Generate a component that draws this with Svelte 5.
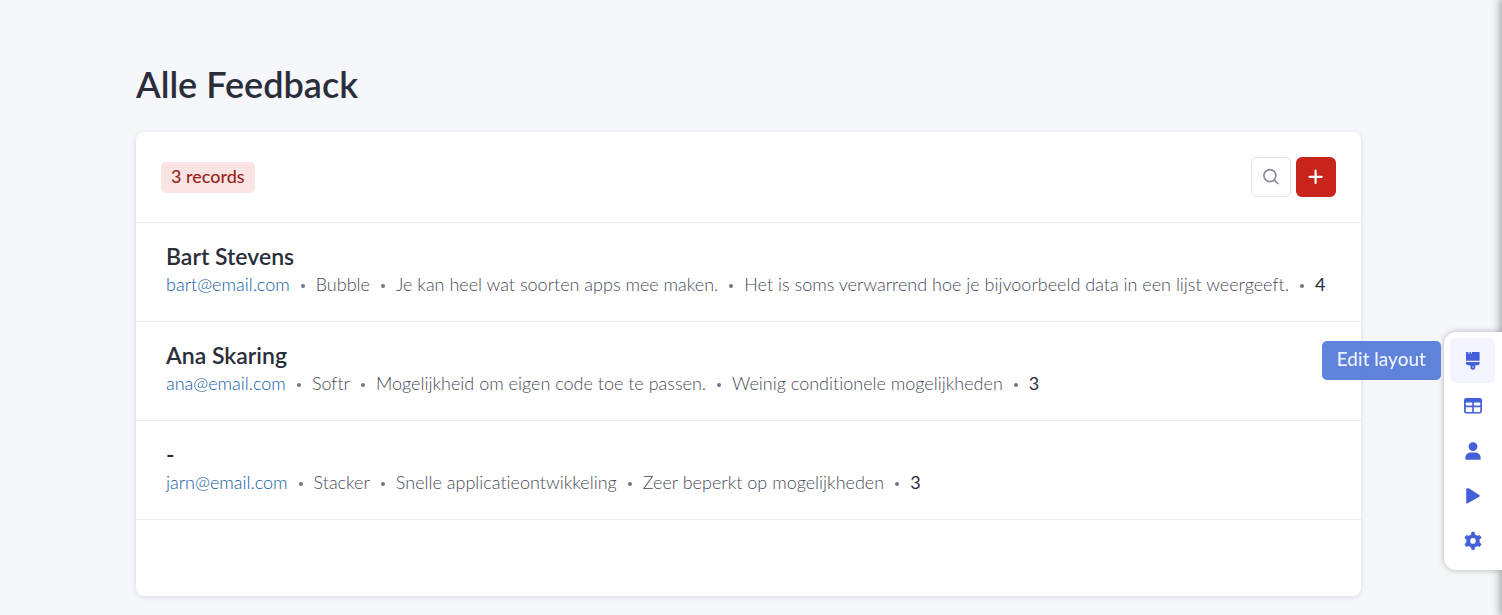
<script>
  const records = [
    {
      name: 'Bart Stevens',
      email: 'bart@email.com',
      details: [
        'Bubble',
        'Je kan heel wat soorten apps mee maken.',
        'Het is soms verwarrend hoe je bijvoorbeeld data in een lijst weergeeft.'
      ],
      score: 4
    },
    {
      name: 'Ana Skaring',
      email: 'ana@email.com',
      details: ['Softr', 'Mogelijkheid om eigen code toe te passen.', 'Weinig conditionele mogelijkheden'],
      score: 3
    },
    {
      name: '-',
      email: 'jarn@email.com',
      details: ['Stacker', 'Snelle applicatieontwikkeling', 'Zeer beperkt op mogelijkheden'],
      score: 3
    }
  ];
</script>

<main>
  <h1>Alle Feedback</h1>
  <section class="card">
    <header>
      <span class="count">{records.length} records</span>
      <div class="actions">
        <button class="search" aria-label="Search">
          <svg width="20" height="20" viewBox="0 0 20 20" fill="none" stroke="#868b9a" stroke-width="1.6">
            <circle cx="8.9" cy="8.6" r="6" /><path d="M13.2 12.9 17.3 17" />
          </svg>
        </button>
        <button class="add" aria-label="Add record">
          <svg width="20" height="20" viewBox="0 0 20 20" stroke="#fff" stroke-width="2.2" stroke-linecap="round">
            <path d="M3.5 9.8h12.2M9.6 3.7v12.2" />
          </svg>
        </button>
      </div>
    </header>
    <ul class="records">
      {#each records as record}
        <li>
          <h2>{record.name}</h2>
          <div class="line">
            <a href="mailto:{record.email}">{record.email}</a>
            {#each record.details as detail}
              <i class="dot"></i><span>{detail}</span>
            {/each}
            <i class="dot"></i><span class="score">{record.score}</span>
          </div>
        </li>
      {/each}
    </ul>
  </section>
</main>

<div class="edge"></div>
<nav class="tools">
  <button class="active" aria-label="Layout" aria-describedby="layout-tip">
    <svg width="20" height="20" viewBox="0 0 20 20" fill="currentColor">
      <path d="M3 1.5Q3 1 3.5 1H5.4V3H6.4V1H8V2.6H9V1H16Q16.6 1 16.6 1.6V9.8H3Z" />
      <path d="M3 10.9H16.6V12.4Q16.6 14.2 14.8 14.2H12.3V16Q12.3 18.8 9.9 18.8Q7.4 18.8 7.4 16V14.2H4.8Q3 14.2 3 12.4Z" />
      <circle cx="9.9" cy="15.9" r=".7" fill="#f3f4fe" />
    </svg>
  </button>
  <button aria-label="Data">
    <svg width="20" height="20" viewBox="0 0 20 20" fill="currentColor" fill-rule="evenodd">
      <path d="M3.3 2H16.7Q19 2 19 4.3V15.2Q19 17.5 16.7 17.5H3.3Q1 17.5 1 15.2V4.3Q1 2 3.3 2ZM2.7 6.4V9.6H9.2V6.4ZM10.8 6.4V9.6H17.3V6.4ZM2.7 11.2V15Q2.7 15.9 3.6 15.9H9.2V11.2ZM10.8 11.2V15.9H16.4Q17.3 15.9 17.3 15V11.2Z" />
    </svg>
  </button>
  <button aria-label="Users">
    <svg width="20" height="20" viewBox="0 0 20 20" fill="currentColor">
      <circle cx="10" cy="5.6" r="4.4" />
      <path d="M2.3 17.5C2.3 13.6 5 11.6 8.2 11.6H11.8C15 11.6 17.7 13.6 17.7 17.5Q17.7 18.8 16.4 18.8H3.6Q2.3 18.8 2.3 17.5Z" />
    </svg>
  </button>
  <button aria-label="Preview">
    <svg width="20" height="20" viewBox="0 0 20 20" fill="currentColor" stroke="currentColor" stroke-width="2" stroke-linejoin="round">
      <path d="M4.2 3.2V16.4L15.8 9.8 5.2 3.2Z" />
    </svg>
  </button>
  <button aria-label="Settings">
    <svg width="20" height="20" viewBox="0 0 20 20" fill="currentColor">
      <path d="M8.2 3.7 8.6 1.8Q8.7 1.1 9.4 1.1H10.6Q11.3 1.1 11.4 1.8L11.8 3.7 14.3 5.1 16.1 4.5Q16.8 4.3 17.2 4.9L17.9 6.1Q18.3 6.8 17.7 7.3L16.3 8.5V11.4L17.7 12.6Q18.3 13.1 17.9 13.7L17.2 14.9Q16.8 15.6 16.1 15.4L14.3 14.8 11.8 16.2 11.4 18.1Q11.3 18.8 10.6 18.8H9.4Q8.7 18.8 8.6 18.1L8.2 16.2 5.7 14.8 3.9 15.4Q3.2 15.6 2.8 14.9L2.1 13.7Q1.7 13.1 2.3 12.6L3.7 11.4V8.5L2.3 7.3Q1.7 6.8 2.1 6.1L2.8 4.9Q3.2 4.3 3.9 4.5L5.7 5.1Z" stroke="currentColor" stroke-width=".6" stroke-linejoin="round" />
      <circle cx="10" cy="9.9" r="2.8" fill="#fff" />
    </svg>
  </button>
  <div class="tip" id="layout-tip" role="tooltip">Edit layout</div>
</nav>

<style>
  :global(body) {
    margin: 0;
    background: #f5f7fb;
    overflow-x: hidden;
    font-family: Lato, 'Open Sans', sans-serif;
    font-variant-ligatures: none;
    color: #2a2e3a;
  }
  main {
    padding: 60px 141px 19px 136px;
  }
  h1 {
    margin: 0 0 24px;
    font-size: 36px;
    line-height: 48px;
    font-weight: 600;
  }
  .card {
    padding-bottom: 76px;
    background: #fff;
    border-radius: 8px;
    box-shadow: 0 1px 5px rgba(30, 35, 60, 0.14);
  }
  header {
    display: flex;
    align-items: center;
    justify-content: space-between;
    padding: 25px;
    border-bottom: 1px solid #ebecef;
  }
  .count {
    padding: 0 10px 2px;
    border-radius: 5px;
    background: #f9e4e3;
    color: #9a1f19;
    font-size: 18px;
    line-height: 29px;
    font-weight: 500;
  }
  .actions {
    display: flex;
    gap: 5px;
  }
  button {
    display: flex;
    align-items: center;
    justify-content: center;
    width: 40px;
    height: 40px;
    padding: 0;
    border: 0;
    border-radius: 6px;
    background: none;
    cursor: pointer;
  }
  .search {
    border: 1px solid #e3e3e6;
    background: #fff;
  }
  .add {
    background: #c8241b;
  }
  .records {
    margin: 0;
    padding: 0;
    list-style: none;
  }
  li {
    padding: 18px 30px 24px;
    border-bottom: 1px solid #e9edf1;
  }
  h2 {
    margin: 0;
    font-size: 23px;
    line-height: 30px;
    font-weight: 600;
  }
  .line {
    display: flex;
    align-items: center;
    font-size: 18px;
    line-height: 26px;
    font-weight: 300;
    white-space: nowrap;
    color: #474b57;
  }
  a {
    color: #0f5ba3;
    text-decoration: none;
  }
  .dot {
    flex: none;
    width: 4px;
    height: 4px;
    margin: 4px 11px 0;
    border-radius: 50%;
    background: #717580;
  }
  .score {
    color: #2a2e3a;
    font-weight: 400;
  }
  .edge {
    position: fixed;
    inset: 0 -10px 0 auto;
    width: 10px;
    box-shadow: 0 0 8px 2px rgba(0, 0, 0, 0.35);
  }
  .tools {
    position: fixed;
    top: 332px;
    right: 0;
    display: flex;
    flex-direction: column;
    padding: 6px 7px 7px 6px;
    border-radius: 12px 0 0 12px;
    background: #fff;
    box-shadow: 0 0 6px rgba(0, 0, 0, 0.28);
  }
  .tools button {
    width: 45px;
    height: 45px;
    color: #445fd8;
  }
  .tools .active {
    background: #f3f4fe;
  }
  .tip {
    position: absolute;
    top: 9px;
    right: 61px;
    padding: 0 15px 3px;
    border-radius: 5px;
    background: rgba(72, 112, 214, 0.87);
    color: #eef2fd;
    font-size: 19px;
    line-height: 36px;
    font-weight: 500;
    white-space: nowrap;
  }
</style>
